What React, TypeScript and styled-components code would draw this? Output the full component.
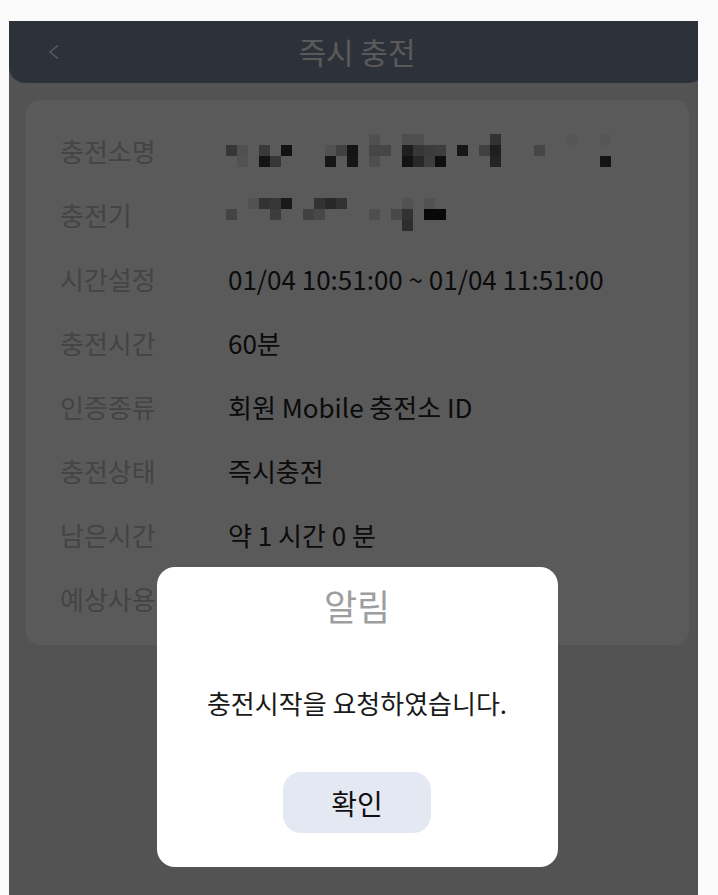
import * as React from "react";
import styled, { createGlobalStyle } from "styled-components";

type Block = [number, number, number];

// mosaic cells: [column, row, dimmed grey level]
const stationBlocks: Block[] = [
  [13, 0, 80], [16, 0, 78], [17, 0, 78], [24, 0, 50], [31, 0, 86], [34, 0, 86],
  [0, 1, 55], [1, 1, 80], [3, 1, 58], [5, 1, 18], [9, 1, 82], [10, 1, 65],
  [11, 1, 20], [13, 1, 70], [14, 1, 70], [16, 1, 30], [17, 1, 55], [18, 1, 60],
  [19, 1, 62], [21, 1, 22], [23, 1, 65], [24, 1, 30], [28, 1, 70],
  [1, 2, 82], [3, 2, 20], [4, 2, 55], [9, 2, 22], [11, 2, 22], [13, 2, 78],
  [16, 2, 18], [17, 2, 40], [18, 2, 62], [19, 2, 16], [24, 2, 35], [34, 2, 20],
];

const chargerBlocks: Block[] = [
  [2, 0, 82], [3, 0, 50], [4, 0, 55], [5, 0, 25], [8, 0, 50], [9, 0, 40],
  [10, 0, 50], [16, 0, 82], [18, 0, 82],
  [0, 1, 68], [4, 1, 60], [7, 1, 65], [8, 1, 72], [13, 1, 78], [15, 1, 72],
  [16, 1, 50], [18, 1, 8], [19, 1, 8],
  [16, 2, 45],
];

type Row = { label: string; value?: string; blocks?: Block[] };

const rows: Row[] = [
  { label: "충전소명", blocks: stationBlocks },
  { label: "충전기", blocks: chargerBlocks },
  { label: "시간설정", value: "01/04 10:51:00 ~ 01/04 11:51:00" },
  { label: "충전시간", value: "60분" },
  { label: "인증종류", value: "회원 Mobile 충전소 ID" },
  { label: "충전상태", value: "즉시충전" },
  { label: "남은시간", value: "약 1 시간 0 분" },
  { label: "예상사용금액", value: "약 0 원" },
];

const GlobalStyle = createGlobalStyle`
  body {
    margin: 0;
    background: #fbfbfb;
    font-family: "Noto Sans CJK KR", "Noto Sans", sans-serif;
  }
`;

function Mosaic({ blocks }: { blocks: Block[] }) {
  const size = 11;
  return (
    <MosaicSvg width={size * 36} height={size * 3} viewBox={`0 0 ${size * 36} ${size * 3}`}>
      {blocks.map(([c, r, d], i) => (
        <rect
          key={i}
          x={c * size}
          y={r * size}
          width={size}
          height={size}
          fill="#000"
          fillOpacity={Math.max(0, Math.min(1, 1 - d / 90))}
        />
      ))}
    </MosaicSvg>
  );
}

function App() {
  return (
    <>
      <GlobalStyle />
      <Page>
        <Frame>
          <Screen>
            <Header>
              <BackButton aria-label="back">
                <svg width="12" height="16" viewBox="0 0 12 16">
                  <polyline
                    points="10,1.5 2,8 10,14.5"
                    fill="none"
                    stroke="#fff"
                    strokeWidth="1.6"
                    strokeLinejoin="round"
                  />
                </svg>
              </BackButton>
              <Title>즉시 충전</Title>
              <span />
            </Header>
            <Content>
              <Card>
                {rows.map((row) => (
                  <InfoRow key={row.label}>
                    <Label>{row.label}</Label>
                    {row.blocks ? <Mosaic blocks={row.blocks} /> : <Value>{row.value}</Value>}
                  </InfoRow>
                ))}
              </Card>
            </Content>
          </Screen>
          <Overlay>
            <Dialog>
              <DialogTitle>알림</DialogTitle>
              <DialogMessage>충전시작을 요청하였습니다.</DialogMessage>
              <ConfirmButton>확인</ConfirmButton>
            </Dialog>
          </Overlay>
        </Frame>
      </Page>
    </>
  );
}
export default App;

const Page = styled.div`
  padding: 21px 0 0 9px;
`;

const Frame = styled.div`
  position: relative;
  width: 689px;
  height: 874px;
  overflow: hidden;
`;

const Screen = styled.div`
  width: 696px;
  height: 100%;
  background: #ececec;
`;

const Header = styled.header`
  height: 62px;
  display: grid;
  grid-template-columns: 1fr auto 1fr;
  align-items: center;
  background: #808ba4;
  border-radius: 0 0 16px 16px;
`;

const BackButton = styled.button`
  justify-self: start;
  display: flex;
  align-items: center;
  margin-left: 39px;
  padding: 0;
  border: 0;
  background: none;
`;

const Title = styled.h1`
  margin: 0;
  font-size: 30px;
  font-weight: 400;
  color: #ffffff;
  line-height: 1;
  padding-bottom: 2px;
`;

const Content = styled.main`
  padding: 17px 16px 0 17px;
`;

const Card = styled.section`
  background: #ffffff;
  border-radius: 14px;
  padding: 18px 0 15px;
`;

const InfoRow = styled.div`
  height: 64px;
  display: grid;
  grid-template-columns: 168px 1fr;
  align-items: center;
  padding-left: 34px;
  white-space: nowrap;
`;

const Label = styled.span`
  font-size: 26px;
  color: #c0c0c0;
`;

const Value = styled.span`
  font-size: 26px;
  color: #222222;
`;

const MosaicSvg = styled.svg`
  display: block;
  margin-left: -2px;
`;

const Overlay = styled.div`
  position: absolute;
  top: 0;
  left: 0;
  bottom: 0;
  width: 696px;
  background: rgba(0, 0, 0, 0.647);
  display: flex;
  justify-content: center;
  align-items: flex-start;
  padding-top: 546px;
  box-sizing: border-box;
`;

const Dialog = styled.div`
  width: 401px;
  height: 300px;
  box-sizing: border-box;
  background: #ffffff;
  border-radius: 18px;
  display: flex;
  flex-direction: column;
  align-items: center;
  padding-top: 18px;
`;

const DialogTitle = styled.h2`
  margin: 0;
  font-size: 36px;
  line-height: 40px;
  font-weight: 400;
  color: #9e9e9e;
`;

const DialogMessage = styled.p`
  margin: 61px 0 0;
  font-size: 26px;
  line-height: 34px;
  color: #1a1a1a;
`;

const ConfirmButton = styled.button`
  margin-top: 52px;
  width: 148px;
  height: 61px;
  border: 0;
  border-radius: 18px;
  background: #e4e8f2;
  font-family: inherit;
  font-size: 28px;
  color: #111111;
`;
